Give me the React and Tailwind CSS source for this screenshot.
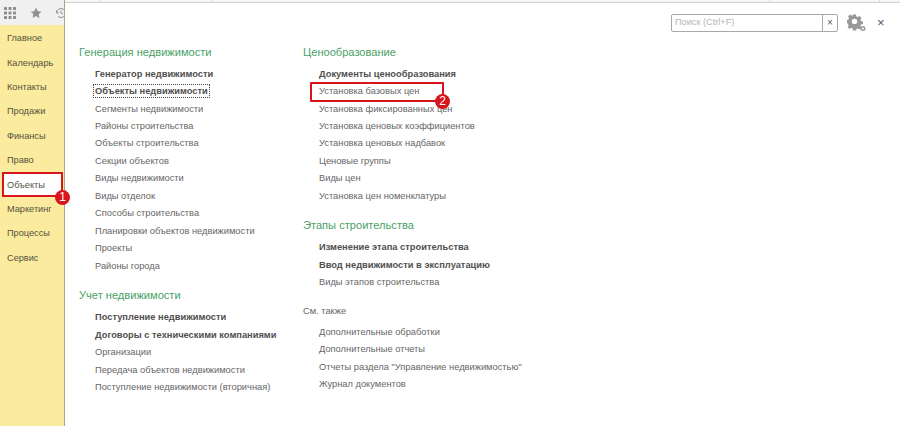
import React from "react";

const Item = ({ children, bold, focus, box, badge }) => (
  <div className="relative h-[17.45px] leading-[17.45px] pl-4 whitespace-nowrap">
    <span className={"relative z-10 " + (bold ? "font-bold text-[#505050]" : "text-[#666666]") + (focus ? " outline-1 outline-dotted outline-[#444] outline-offset-[1px]" : "")}>{children}</span>
    {box && <div className="absolute left-[7px] top-[-1px] w-[134px] h-[20px] border-2 border-[#d8141c] rounded-[1px]" />}
    {badge && <Badge className="left-[132px] top-[11px]">{badge}</Badge>}
  </div>
);

const Badge = ({ children, className }) => (
  <div className={"absolute w-[15px] h-[15px] rounded-full bg-[#d8141c] text-white text-[12px] leading-[15px] text-center z-20 " + className}>{children}</div>
);

const Heading = ({ children, className = "" }) => (
  <div className={"text-[11.1px] leading-[16px] text-[#4a9f66] " + className}>{children}</div>
);

const nav = ["Главное", "Календарь", "Контакты", "Продажи", "Финансы", "Право", "Объекты", "Маркетинг", "Процессы", "Сервис"];

export default function App() {
  return (
    <div className="w-[900px] h-[426px] overflow-hidden flex bg-white text-[9.3px]" style={{ fontFamily: '"Liberation Sans", Arial, sans-serif' }}>
      <aside className="w-[65px] shrink-0 flex flex-col border-r border-[#a9a68c]">
        <div className="h-[25px] bg-[#f0f0f0] flex items-center pl-1 overflow-hidden shrink-0">
          <svg width="12" height="12" viewBox="0 0 12 12" className="shrink-0" fill="#8f8f8f">
            {[0, 4.5, 9].flatMap((y) => [0, 4.5, 9].map((x) => <rect key={x + "-" + y} x={x} y={y} width="3" height="3" rx="0.5" />))}
          </svg>
          <svg width="12" height="12" viewBox="0 0 24 24" className="shrink-0 ml-[14px]" fill="#8f8f8f"><path d="M12 1l3.4 7.3 7.6 1-5.6 5.4 1.4 7.8L12 18l-6.8 3.5 1.4-7.8L1 9.3l7.6-1z" /></svg>
          <svg width="12" height="12" viewBox="0 0 24 24" className="shrink-0 ml-[13px]" fill="none" stroke="#8f8f8f" strokeWidth="2"><path d="M3 12a9 9 0 1 1 3 6.7M3 7v5h5M12 7v5l4 2" /></svg>
        </div>
        <nav className="flex-1 bg-[#faeb9f] pt-[1.2px] relative">
          {nav.map((n) => (
            <div key={n} className="relative h-[24.4px] leading-[24.4px] pl-[7px] text-[9.2px] text-[#55523e]">
              {n === "Объекты" && (
                <>
                  <div className="absolute left-[2px] top-[-1px] w-[61px] h-[25px] border-2 border-[#d8141c] bg-white" />
                  <Badge className="left-[55px] top-[17px]">1</Badge>
                </>
              )}
              <span className="relative">{n}</span>
            </div>
          ))}
        </nav>
      </aside>

      <main className="flex-1 flex flex-col min-w-0">
        <div className="h-[3px] bg-[#f7f7f7] border-b border-[#cfcfcf] shrink-0 flex">
          <div className="w-[36px] border-r border-[#dddddd]" />
          <div className="w-[112px] border-r border-[#dddddd]" />
          <div className="w-[557px] border-r border-[#dddddd]" />
          <div className="w-[110px] border-r border-[#dddddd]" />
        </div>
        <div className="relative flex-1 flex">
          <div className="absolute top-[11px] left-[606px] flex items-center">
            <div className="w-[167px] h-[18px] border border-[#a8a8a8] rounded-[2px] flex items-center bg-white">
              <span className="flex-1 pl-[3px] text-[#b5b5b5] text-[9.2px]">Поиск (Ctrl+F)</span>
              <span className="w-[15px] h-full border-l border-[#a8a8a8] flex items-center justify-center text-[#555] text-[10px] leading-none">×</span>
            </div>
            <svg width="19" height="18" viewBox="0 0 19 18" className="ml-[9px]" fill="#999999">
              <path fillRule="evenodd" d="M6 .5h3l.4 2 1.4.6 1.7-1.1 2 2-1.1 1.7.6 1.4 2 .4v2.6l-2 .4-.6 1.4 1.1 1.7-2 2-1.7-1.1-1.4.6-.4 1.5H6l-.4-2-1.4-.6-1.7 1.1-2-2 1.1-1.7-.6-1.4L0 8.700V6l1.500-.4.6-1.4L1 2.500l2-1.900 1.700 1.100 1-.4zM7.500 4.700a2.700 2.700 0 1 0 0 5.400 2.700 2.700 0 0 0 0-5.400z" />
              <path fillRule="evenodd" d="M16 12a2.500 2.500 0 1 1 0 5 2.500 2.500 0 0 1 0-5zm0 1.500a1 1 0 1 0 0 2 1 1 0 0 0 0-2z" />
            </svg>
            <span className="ml-[11px] -mt-[2px] text-[#555] text-[13px] leading-none">×</span>
          </div>

          <div className="pl-[14px] pt-[41px] w-[238px] shrink-0">
            <Heading className="mb-[5.7px]">Генерация недвижимости</Heading>
            <Item bold>Генератор недвижимости</Item>
            <Item bold focus>Объекты недвижимости</Item>
            <Item>Сегменты недвижимости</Item>
            <Item>Районы строительства</Item>
            <Item>Объекты строительства</Item>
            <Item>Секции объектов</Item>
            <Item>Виды недвижимости</Item>
            <Item>Виды отделок</Item>
            <Item>Способы строительства</Item>
            <Item>Планировки объектов недвижимости</Item>
            <Item>Проекты</Item>
            <Item>Районы города</Item>
            <Heading className="mt-[12.3px] mb-[6px]">Учет недвижимости</Heading>
            <Item bold>Поступление недвижимости</Item>
            <Item bold>Договоры с техническими компаниями</Item>
            <Item>Организации</Item>
            <Item>Передача объектов недвижимости</Item>
            <Item>Поступление недвижимости (вторичная)</Item>
          </div>

          <div className="pt-[41px] flex-1">
            <Heading className="mb-[5.7px]">Ценообразование</Heading>
            <Item bold>Документы ценообразования</Item>
            <Item box badge="2">Установка базовых цен</Item>
            <Item>Установка фиксированных цен</Item>
            <Item>Установка ценовых коэффициентов</Item>
            <Item>Установка ценовых надбавок</Item>
            <Item>Ценовые группы</Item>
            <Item>Виды цен</Item>
            <Item>Установка цен номенклатуры</Item>
            <Heading className="mt-[12.3px] mb-[6px]">Этапы строительства</Heading>
            <Item bold>Изменение этапа строительства</Item>
            <Item bold>Ввод недвижимости в эксплуатацию</Item>
            <Item>Виды этапов строительства</Item>
            <div className="mt-[11px] mb-[5px] h-[16px] leading-[16px] text-[#666666]">См. также</div>
            <Item>Дополнительные обработки</Item>
            <Item>Дополнительные отчеты</Item>
            <Item>Отчеты раздела "Управление недвижимостью"</Item>
            <Item>Журнал документов</Item>
          </div>
        </div>
      </main>
    </div>
  );
}
